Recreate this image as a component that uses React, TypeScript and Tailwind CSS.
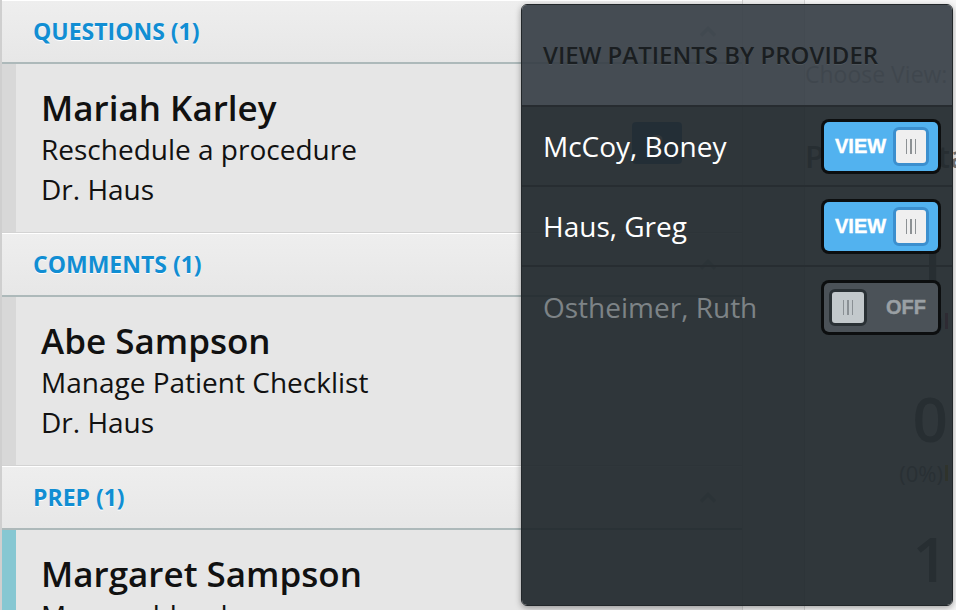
import React from "react";

function Chevron() {
  return (
    <svg width="18" height="11" viewBox="0 0 18 11" className="block">
      <path d="M2 9.5 L9 2.5 L16 9.5" fill="none" stroke="#b9bdbf" strokeWidth="3.5" />
    </svg>
  );
}

function Grip({ color }: { color: string }) {
  return (
    <div className="flex gap-[3px]">
      <div className="w-[1.5px] h-[15px]" style={{ background: color }} />
      <div className="w-[1.5px] h-[15px]" style={{ background: color }} />
      <div className="w-[1.5px] h-[15px]" style={{ background: color }} />
    </div>
  );
}

function ToggleOn() {
  return (
    <div className="w-[120px] h-[55px] rounded-[8px] bg-[#0c0e0f] p-[3px] shrink-0">
      <div className="h-full rounded-[5px] bg-[#52b2ef] flex items-center justify-between pl-[11px] pr-[9px]">
        <span className="font-['Liberation_Sans',Arial,sans-serif] font-bold text-[20px] leading-none text-white [-webkit-text-stroke:0.4px_#ffffff]">
          VIEW
        </span>
        <div className="w-[36px] h-[39px] rounded-[6px] border-[3px] border-[#3b8fce] bg-[#efefef] flex items-center justify-center">
          <Grip color="#8c9194" />
        </div>
      </div>
    </div>
  );
}

function ToggleOff() {
  return (
    <div className="w-[120px] h-[55px] rounded-[8px] bg-[#0c0e0f] p-[3px] shrink-0">
      <div className="h-full rounded-[5px] bg-[#4b5258] flex items-center justify-between pl-[5px] pr-[12px]">
        <div className="w-[38px] h-[37px] rounded-[6px] border-[3px] border-[#2a3135] bg-[#c3c9cc] flex items-center justify-center">
          <Grip color="#8a9094" />
        </div>
        <span className="font-['Liberation_Sans',Arial,sans-serif] font-bold text-[20px] leading-none text-[#9aa0a4] [-webkit-text-stroke:0.4px_#9aa0a4]">
          OFF
        </span>
      </div>
    </div>
  );
}

function Section({
  title,
  name,
  sub,
  doc,
  strip,
  icon,
}: {
  title: string;
  name: string;
  sub: string;
  doc: string;
  strip: string;
  icon?: boolean;
}) {
  return (
    <div>
      <div className="h-[64px] border-t border-white border-b-2 border-b-[#adb9ba] bg-gradient-to-b from-[#eeeeee] to-[#e7e7e7] flex items-center justify-between pl-[31px] pr-[25px]">
        <span className="text-[23px] font-bold text-[#118ed3] leading-none [text-shadow:0_1px_0_#ffffff]">
          {title}
        </span>
        <Chevron />
      </div>
      <div className="h-[169px] flex border-b border-[#d3d3d3] bg-[#e6e6e6]">
        <div className="w-[14px] shrink-0" style={{ background: strip }} />
        <div className="flex-1 pl-[25px] pt-[23px] text-[#111111] whitespace-nowrap">
          <div className="text-[35px] font-semibold leading-[42px]">{name}</div>
          <div className="text-[28px] leading-[40px]">{sub}</div>
          <div className="text-[28px] leading-[40px]">{doc}</div>
        </div>
        {icon && (
          <div className="pt-[58px] pr-[60px]">
            <div className="w-[50px] h-[42px] rounded-[4px] bg-[#4a86b8] text-white text-[24px] font-bold flex items-center justify-center">
              ?
            </div>
          </div>
        )}
      </div>
    </div>
  );
}

export default function App() {
  return (
    <div className="relative w-[956px] h-[610px] overflow-hidden flex bg-[#f6f6f6] font-['Open_Sans',sans-serif]">
      {/* list column */}
      <div className="w-[743px] shrink-0 border-l-2 border-[#cfcfcf] border-r border-r-[#d2d2d2] bg-[#e6e6e6]">
        <Section
          title="QUESTIONS (1)"
          name="Mariah Karley"
          sub="Reschedule a procedure"
          doc="Dr. Haus"
          strip="#d8d8d8"
          icon
        />
        <Section
          title="COMMENTS (1)"
          name="Abe Sampson"
          sub="Manage Patient Checklist"
          doc="Dr. Haus"
          strip="#d8d8d8"
        />
        <Section
          title="PREP (1)"
          name="Margaret Sampson"
          sub="Manage blood pressure"
          doc="Dr. Haus"
          strip="#86c7d2"
        />
      </div>
      {/* narrow spacer column */}
      <div className="w-[62px] shrink-0 bg-[#f1f1f1] border-r border-[#d6d6d6]" />
      {/* right panel (mostly hidden) */}
      <div className="flex-1 bg-[#f7f7f7] flex flex-col whitespace-nowrap overflow-hidden">
        <div className="pt-[60px] text-[23px] leading-[28px] text-[#a0a0a0]">Choose View:</div>
        <div className="mt-[50px] text-[31px] leading-[36px] font-semibold text-[#7a7a7a]">
          Patient Status
        </div>
        <div className="flex flex-col items-end pr-[8px]">
          <div className="mt-[58px] text-[62px] leading-[56px] font-semibold text-[#7a7a7a]">1</div>
          <div className="flex items-center mt-[20px]">
            <span className="text-[22px] leading-[26px] text-[#9a9a9a]">(20%)</span>
            <span className="w-[3px] h-[16px] ml-[2px] bg-[#e05a8a]" />
          </div>
          <div className="mt-[56px] text-[62px] leading-[56px] font-semibold text-[#7a7a7a]">0</div>
          <div className="flex items-center mt-[14px]">
            <span className="text-[22px] leading-[26px] text-[#9a9a9a]">(0%)</span>
            <span className="w-[3px] h-[16px] ml-[2px] bg-[#e8c130]" />
          </div>
          <div className="mt-[44px] text-[62px] leading-[56px] font-semibold text-[#7a7a7a]">1</div>
        </div>
      </div>

      {/* popover overlay */}
      <div className="absolute left-[521px] top-[4px] w-[432px] h-[602px] rounded-[6px] border border-[#22272a] overflow-hidden flex flex-col shadow-[0_2px_6px_rgba(0,0,0,0.35)]">
        <div className="h-[102px] shrink-0 bg-[rgba(56,63,71,0.93)] border-b-2 border-[#272c30] flex items-center pl-[21px]">
          <span className="text-[24px] font-semibold text-[#1a1e21] leading-none [text-shadow:0_1px_0_rgba(255,255,255,0.08)]">
            VIEW PATIENTS BY PROVIDER
          </span>
        </div>
        <div className="flex-1 bg-[rgba(32,40,44,0.93)] flex flex-col">
          <div className="h-[80px] border-b-2 border-[#272d31] flex items-center justify-between pl-[21px] pr-[11px]">
            <span className="text-[28px] text-white">McCoy, Boney</span>
            <ToggleOn />
          </div>
          <div className="h-[80px] border-b-2 border-[#272d31] flex items-center justify-between pl-[21px] pr-[11px]">
            <span className="text-[28px] text-white">Haus, Greg</span>
            <ToggleOn />
          </div>
          <div className="h-[80px] flex items-center justify-between pl-[21px] pr-[11px]">
            <span className="text-[28px] text-[#7d8386]">Ostheimer, Ruth</span>
            <ToggleOff />
          </div>
        </div>
      </div>
    </div>
  );
}
